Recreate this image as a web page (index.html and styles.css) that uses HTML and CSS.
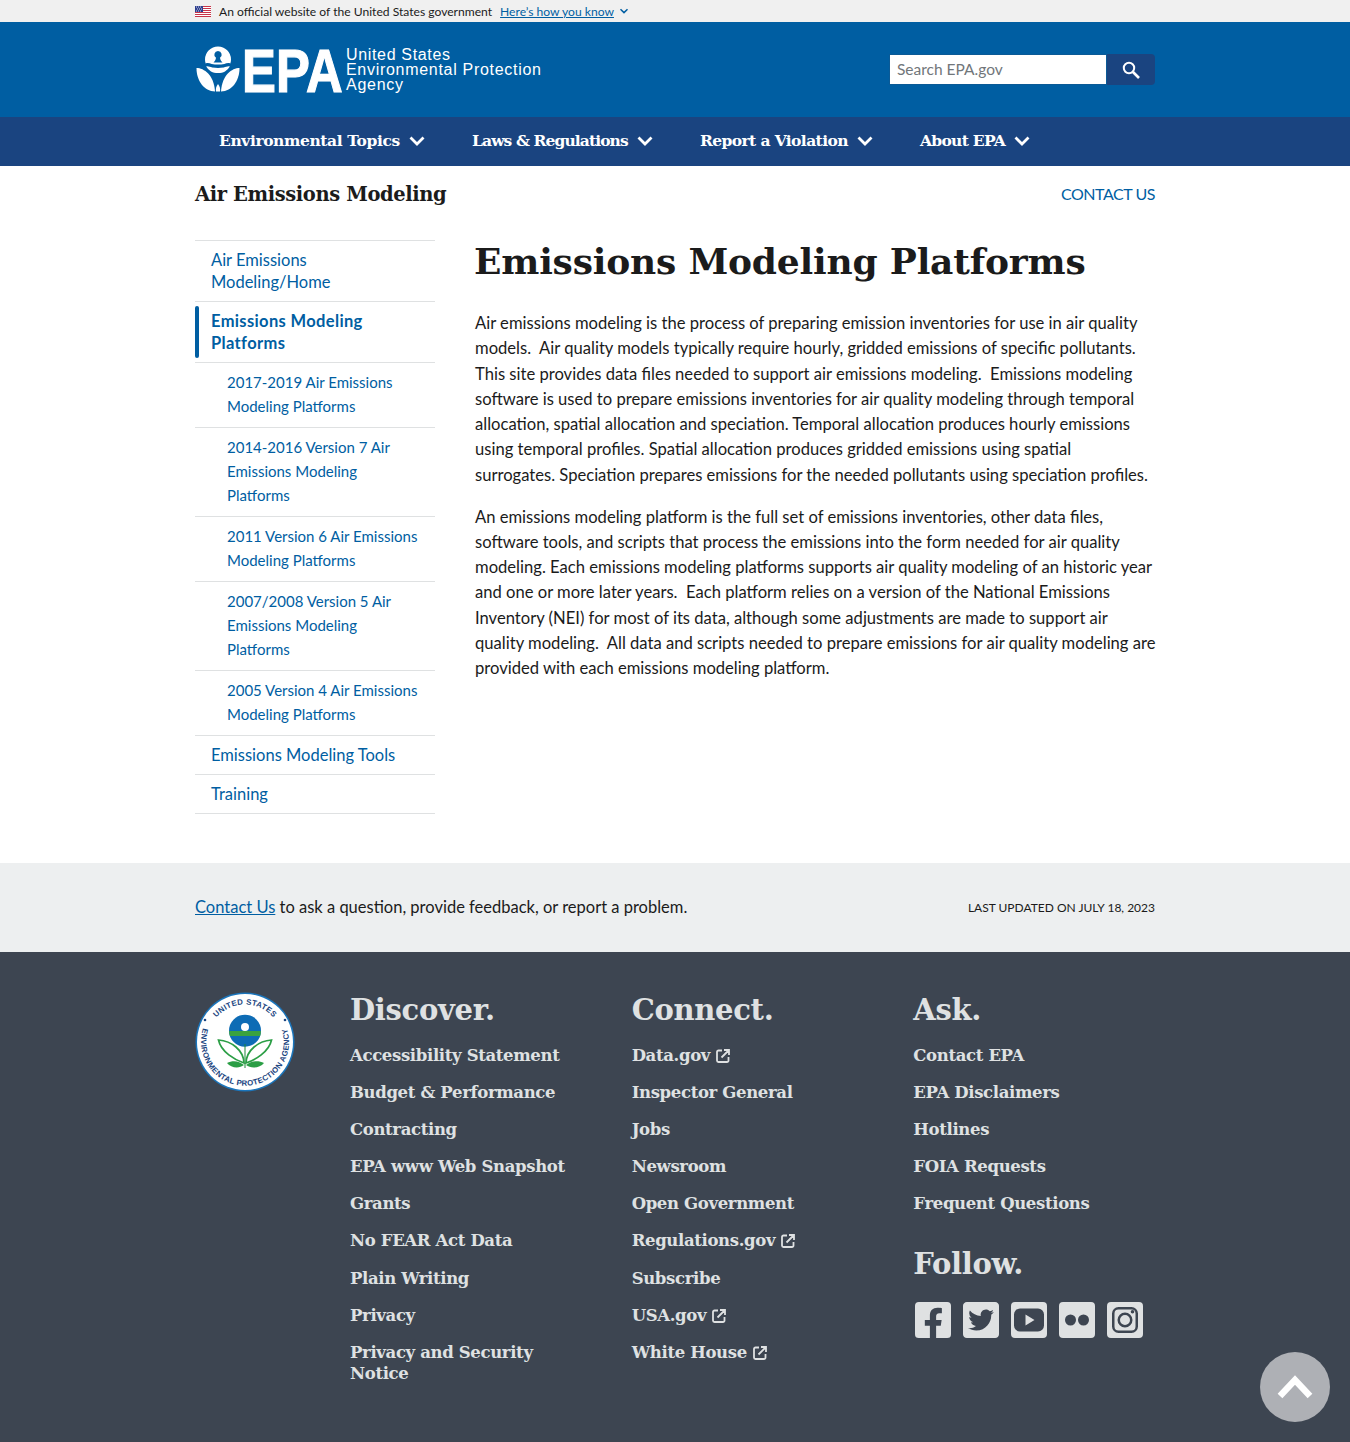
FILE: index.html
```html
<!DOCTYPE html>
<html>
<head>
    <title>Emissions Modeling Platforms | US EPA</title>
    <meta name="viewport" content="width=device-width, initial-scale=1">
    <link rel="stylesheet" href="styles.css">
</head>
<body>
    <div class="govBanner">
        <div class="wrap govRow">
            <svg class="flag" width="16" height="11" viewBox="0 0 16 11"><rect width="16" height="11" fill="#fff"/><path d="M0 .5h16M0 2.500h16M0 4.500h16M0 6.500h16M0 8.500h16M0 10.500h16" stroke="#c8344a" stroke-width="1"/><rect width="8" height="6" fill="#2e3f8f"/><path d="M1 1h1M3 1h1M5 1h1M2 3h1M4 3h1M6 3h1M1 5h1M3 5h1M5 5h1" stroke="#fff" stroke-width=".8"/></svg>
            <span>An official website of the United States government</span>
            <a class="govLink" href="#">Here’s how you know</a>
            <svg class="govChevron" width="10" height="6" viewBox="0 0 10 6"><path d="M1.500 1.200 5 4.600l3.500-3.400" fill="none" stroke="#005ea2" stroke-width="1.500"/></svg>
        </div>
    </div>

    <header class="siteHeader">
        <div class="wrap headerRow">
            <svg class="logo" width="348" height="50" viewBox="0 0 348 50">
                <path fill="#fff" fill-rule="evenodd" d="M23 1.500a13 13 0 0 1 13 13c0 1.500-.2 2.800-.7 4-2-.8-3.800-.2-6 .4-2 .5-4.300.6-6.300.6s-4.300-.1-6.300-.6c-2.200-.6-4-1.200-6-.4-.5-1.200-.7-2.500-.7-4a13 13 0 0 1 13-13zm0 4.500a3.700 3.700 0 0 0-2 6.800c-.3 2-1.200 3.500-2.500 4.700h9c-1.300-1.200-2.200-2.700-2.500-4.700a3.700 3.700 0 0 0-2-6.800z"/>
                <path fill="#fff" d="M11.200 21.500c2-.5 4 .6 6 1 2 .3 3.800.4 5.800.4s3.800-.1 5.800-.4c2-.4 4-1.500 6-1a13 13 0 0 1-4.800 5c-2 1-4.300 1.500-7 1.500s-5-.5-7-1.500a13 13 0 0 1-4.800-5z"/>
                <path fill="#fff" d="M1.500 23c7.500 0 17.500 7 18.500 23.500C9 46 1.500 36 1.500 23z"/>
                <path fill="#fff" d="M44.500 23c-7.500 0-17.500 7-18.500 23.500C37 46 44.500 36 44.500 23z"/>
                <path fill="#fff" d="M23 39c2 2.500 2.500 5 2 7.500h-4c-.5-2.500 0-5 2-7.500z"/>
                <text class="logoEpa" transform="translate(47 46.500) scale(.82 1)">EPA</text>
                <text class="logoName" x="151" y="14.500" textLength="104">United States</text>
                <text class="logoName" x="151" y="29.500" textLength="195">Environmental Protection</text>
                <text class="logoName" x="151" y="45" textLength="57">Agency</text>
            </svg>
            <form class="searchBox" onsubmit="return false">
                <input class="searchInput" type="text" placeholder="Search EPA.gov">
                <button class="searchButton" aria-label="Search">
                    <svg width="20" height="20" viewBox="0 0 20 20"><circle cx="8" cy="8" r="5.200" fill="none" stroke="#fff" stroke-width="2"/><path d="m12 12 6 6" stroke="#fff" stroke-width="2.600"/></svg>
                </button>
            </form>
        </div>
    </header>

    <nav class="mainNav">
        <div class="wrap navRow">
            <a class="navItem navTopics" href="#">Environmental Topics<svg class="chev" width="16" height="10" viewBox="0 0 16 10"><path d="M1.500 1.500 8 8l6.500-6.500" /></svg></a>
            <a class="navItem navLaws" href="#">Laws &amp; Regulations<svg class="chev" width="16" height="10" viewBox="0 0 16 10"><path d="M1.500 1.500 8 8l6.500-6.500" /></svg></a>
            <a class="navItem navReport" href="#">Report a Violation<svg class="chev" width="16" height="10" viewBox="0 0 16 10"><path d="M1.500 1.500 8 8l6.500-6.500" /></svg></a>
            <a class="navItem navAbout" href="#">About EPA<svg class="chev" width="16" height="10" viewBox="0 0 16 10"><path d="M1.500 1.500 8 8l6.500-6.500" /></svg></a>
        </div>
    </nav>

    <div class="wrap titleRow">
        <div class="siteTitle">Air Emissions Modeling</div>
        <a class="contactTop" href="#">CONTACT US</a>
    </div>

    <div class="wrap contentRow">
        <ul class="sideNav">
            <li><a href="#">Air Emissions<br>Modeling/Home</a></li>
            <li class="current"><a href="#">Emissions Modeling<br>Platforms</a></li>
            <li class="sub"><a href="#">2017-2019 Air Emissions<br>Modeling Platforms</a></li>
            <li class="sub"><a href="#">2014-2016 Version 7 Air<br>Emissions Modeling<br>Platforms</a></li>
            <li class="sub"><a href="#">2011 Version 6 Air Emissions<br>Modeling Platforms</a></li>
            <li class="sub"><a href="#">2007/2008 Version 5 Air<br>Emissions Modeling<br>Platforms</a></li>
            <li class="sub"><a href="#">2005 Version 4 Air Emissions<br>Modeling Platforms</a></li>
            <li><a href="#">Emissions Modeling Tools</a></li>
            <li><a href="#">Training</a></li>
        </ul>
        <main class="article">
            <h1>Emissions Modeling Platforms</h1>
            <p>Air emissions modeling is the process of preparing emission inventories for use in air quality<br>models.&nbsp; Air quality models typically require hourly, gridded emissions of specific pollutants.<br>This site provides data files needed to support air emissions modeling.&nbsp; Emissions modeling<br>software is used to prepare emissions inventories for air quality modeling through temporal<br>allocation, spatial allocation and speciation. Temporal allocation produces hourly emissions<br>using temporal profiles. Spatial allocation produces gridded emissions using spatial<br>surrogates. Speciation prepares emissions for the needed pollutants using speciation profiles.</p>
            <p>An emissions modeling platform is the full set of emissions inventories, other data files,<br>software tools, and scripts that process the emissions into the form needed for air quality<br>modeling. Each emissions modeling platforms supports air quality modeling of an historic year<br>and one or more later years.&nbsp; Each platform relies on a version of the National Emissions<br>Inventory (NEI) for most of its data, although some adjustments are made to support air<br>quality modeling.&nbsp; All data and scripts needed to prepare emissions for air quality modeling are<br>provided with each emissions modeling platform.</p>
        </main>
    </div>

    <div class="preFooter">
        <div class="wrap preFooterRow">
            <div><a href="#">Contact Us</a> to ask a question, provide feedback, or report a problem.</div>
            <div class="lastUpdated">LAST UPDATED ON JULY 18, 2023</div>
        </div>
    </div>

    <footer class="siteFooter">
        <div class="wrap footerGrid">
            <svg class="seal" width="100" height="100" viewBox="0 0 100 100">
                <circle cx="50" cy="50" r="49.500" fill="#1b75bb"/>
                <circle cx="50" cy="50" r="48" fill="#fff"/>
                <defs>
                    <path id="sealTop" d="M12.500 50a37.500 37.500 0 0 1 75 0"/>
                    <path id="sealBottom" d="M10 31.400A44 44 0 1 0 90 31.400"/>
                </defs>
                <text class="sealText"><textPath href="#sealTop" startOffset="50%" text-anchor="middle">UNITED STATES</textPath></text>
                <text class="sealText"><textPath href="#sealBottom" startOffset="50%" text-anchor="middle">ENVIRONMENTAL PROTECTION AGENCY</textPath></text>
                <circle cx="10" cy="28" r="1.300" fill="#1a4480"/>
                <circle cx="90" cy="28" r="1.300" fill="#1a4480"/>
                <circle cx="50" cy="38.700" r="16" fill="#0e6cb5"/>
                <path d="M34.200 39h31.600a16 16 0 0 1-.7 5H34.900a16 16 0 0 1-.7-5z" fill="#3aa23f"/>
                <circle cx="50" cy="35" r="4" fill="#fff"/>
                <path d="M49.500 52v24h1V52z" fill="#1f8a3b"/>
                <path d="M49 71C40 68 26 60 23.500 48c13 1 25 10 25.500 23z" fill="#fff" stroke="#2b9e45" stroke-width="1.700"/>
                <path d="M51 71c9-3 23-11 25.500-23-13 1-25 10-25.500 23z" fill="#fff" stroke="#2b9e45" stroke-width="1.700"/>
                <path d="M49 73c-5-4-11-5-17-2 4 5 12 6 17 2z" fill="#2b9e45"/>
                <path d="M51 73c5-4 12-5 18-2-4 5-13 6-18 2z" fill="#2b9e45"/>
            </svg>
            <div class="footerCol">
                <h2>Discover.</h2>
                <a href="#">Accessibility Statement</a>
                <a href="#">Budget &amp; Performance</a>
                <a href="#">Contracting</a>
                <a href="#">EPA www Web Snapshot</a>
                <a href="#">Grants</a>
                <a href="#">No FEAR Act Data</a>
                <a href="#">Plain Writing</a>
                <a href="#">Privacy</a>
                <a href="#">Privacy and Security Notice</a>
            </div>
            <div class="footerCol">
                <h2>Connect.</h2>
                <a href="#">Data.gov<svg class="ext" width="14" height="14" viewBox="0 0 14 14"><path d="M6 1.500H2.500a1.500 1.500 0 0 0-1.500 1.500v8.500A1.500 1.500 0 0 0 2.500 13H11a1.500 1.500 0 0 0 1.500-1.500V8M8 1h5v5M13 1 5.500 8.500" /></svg></a>
                <a href="#">Inspector General</a>
                <a href="#">Jobs</a>
                <a href="#">Newsroom</a>
                <a href="#">Open Government</a>
                <a href="#">Regulations.gov<svg class="ext" width="14" height="14" viewBox="0 0 14 14"><path d="M6 1.500H2.500a1.500 1.500 0 0 0-1.500 1.500v8.500A1.500 1.500 0 0 0 2.500 13H11a1.500 1.500 0 0 0 1.500-1.500V8M8 1h5v5M13 1 5.500 8.500" /></svg></a>
                <a href="#">Subscribe</a>
                <a href="#">USA.gov<svg class="ext" width="14" height="14" viewBox="0 0 14 14"><path d="M6 1.500H2.500a1.500 1.500 0 0 0-1.500 1.500v8.500A1.500 1.500 0 0 0 2.500 13H11a1.500 1.500 0 0 0 1.500-1.500V8M8 1h5v5M13 1 5.500 8.500" /></svg></a>
                <a href="#">White House<svg class="ext" width="14" height="14" viewBox="0 0 14 14"><path d="M6 1.500H2.500a1.500 1.500 0 0 0-1.500 1.500v8.500A1.500 1.500 0 0 0 2.500 13H11a1.500 1.500 0 0 0 1.500-1.500V8M8 1h5v5M13 1 5.500 8.500" /></svg></a>
            </div>
            <div class="footerCol">
                <h2>Ask.</h2>
                <a href="#">Contact EPA</a>
                <a href="#">EPA Disclaimers</a>
                <a href="#">Hotlines</a>
                <a href="#">FOIA Requests</a>
                <a href="#">Frequent Questions</a>
                <h2 class="followHead">Follow.</h2>
                <div class="socialRow">
                    <svg width="36" height="36" viewBox="0 32 448 448"><path d="M400 32H48A48 48 0 0 0 0 80v352a48 48 0 0 0 48 48h137.250V327.690h-63V256h63v-54.640c0-62.150 37-96.480 93.670-96.480 27.140 0 55.520 4.840 55.520 4.840v61h-31.270c-30.810 0-40.420 19.120-40.420 38.730V256h68.780l-11 71.690h-57.780V480H400a48 48 0 0 0 48-48V80a48 48 0 0 0-48-48z"/></svg>
                    <svg width="36" height="36" viewBox="0 32 448 448"><path d="M400 32H48C21.500 32 0 53.500 0 80v352c0 26.500 21.500 48 48 48h352c26.500 0 48-21.500 48-48V80c0-26.500-21.500-48-48-48zm-48.900 158.800c.2 2.800.2 5.700.2 8.500 0 86.700-66 186.600-186.600 186.600-37.200 0-71.700-10.800-100.700-29.400 5.300.6 10.400.8 15.800.8 30.700 0 58.900-10.400 81.400-28-28.800-.6-53-19.500-61.300-45.500 10.100 1.500 19.200 1.500 29.600-1.200-30-6.100-52.500-32.500-52.500-64.400v-.8c8.700 4.900 18.900 7.900 29.600 8.300a65.447 65.447 0 0 1-29.200-54.600c0-12.200 3.200-23.400 8.900-33.100 32.300 39.800 80.800 65.800 135.200 68.600-9.300-44.500 24-80.600 64-80.600 18.900 0 35.900 7.900 47.900 20.700 14.800-2.800 29-8.300 41.600-15.800-4.900 15.200-15.200 28-28.800 36.100 13.200-1.400 26-5.100 37.800-10.200-8.900 13.100-20.100 24.700-32.900 34z"/></svg>
                    <svg width="36" height="36" viewBox="0 0 36 36"><path fill-rule="evenodd" d="M4 0h28a4 4 0 0 1 4 4v28a4 4 0 0 1-4 4H4a4 4 0 0 1-4-4V4a4 4 0 0 1 4-4zm5 6.500a6 6 0 0 0-6 6v11a6 6 0 0 0 6 6h18a6 6 0 0 0 6-6v-11a6 6 0 0 0-6-6zM14.500 12.500l9 5.500-9 5.500z"/></svg>
                    <svg width="36" height="36" viewBox="0 0 36 36"><path fill-rule="evenodd" d="M4 0h28a4 4 0 0 1 4 4v28a4 4 0 0 1-4 4H4a4 4 0 0 1-4-4V4a4 4 0 0 1 4-4zm7.500 12.500a5.500 5.500 0 1 0 0 11 5.500 5.500 0 0 0 0-11zm13 0a5.500 5.500 0 1 0 0 11 5.500 5.500 0 0 0 0-11z"/></svg>
                    <svg width="36" height="36" viewBox="0 0 36 36"><path fill-rule="evenodd" d="M4 0h28a4 4 0 0 1 4 4v28a4 4 0 0 1-4 4H4a4 4 0 0 1-4-4V4a4 4 0 0 1 4-4zm7.500 5A6.500 6.500 0 0 0 5 11.500v13A6.500 6.500 0 0 0 11.500 31h13a6.500 6.500 0 0 0 6.500-6.500v-13A6.500 6.500 0 0 0 24.500 5zm0 2.500h13a4 4 0 0 1 4 4v13a4 4 0 0 1-4 4h-13a4 4 0 0 1-4-4v-13a4 4 0 0 1 4-4zM18 10.500a7.500 7.500 0 1 0 0 15 7.500 7.500 0 0 0 0-15zm0 2.500a5 5 0 1 1 0 10 5 5 0 0 1 0-10zm7.500-5a1.800 1.800 0 1 0 0 3.600 1.800 1.800 0 0 0 0-3.600z"/></svg>
                </div>
            </div>
        </div>
    </footer>

    <a class="backToTop" href="#" aria-label="Back to top">
        <svg width="36" height="24" viewBox="0 0 36 24"><path d="M3 21 18 5l15 16" fill="none" stroke="#fff" stroke-width="6.500"/></svg>
    </a>
</body>
</html>
```

FILE: styles.css
```css
* {
    box-sizing: border-box;
}
html, body {
    margin: 0;
    padding: 0;
}
body {
    font-family: "Lato", "Open Sans", sans-serif;
    color: #1b1b1b;
    font-size: 16.500px;
    background: #fff;
}
a {
    color: #005ea2;
    text-decoration: none;
}
.wrap {
    width: 960px;
    margin: 0 auto;
}

/* gov banner */
.govBanner {
    height: 22px;
    background: #f0f0f0;
    font-size: 12.100px;
}
.govRow {
    display: flex;
    align-items: center;
    height: 22px;
}
.flag {
    margin-right: 8px;
}
.govLink {
    margin-left: 8px;
    text-decoration: underline;
}
.govChevron {
    margin-left: 5px;
}

/* header */
.siteHeader {
    height: 95px;
    background: #005ea2;
}
.headerRow {
    display: flex;
    align-items: center;
    justify-content: space-between;
    height: 95px;
}
.logoEpa {
    font-family: "Liberation Sans", sans-serif;
    font-weight: 700;
    font-size: 62px;
    fill: #fff;
    stroke: #fff;
    stroke-width: 1.200;
}
.logoName {
    font-family: "Liberation Sans", sans-serif;
    font-size: 16px;
    fill: #fff;
}
.searchBox {
    display: flex;
    width: 266px;
    height: 31px;
    margin: 0;
}
.searchInput {
    width: 218px;
    height: 31px;
    border: 1px solid #0b5a96;
    padding: 0 7px 2px;
    font-family: "Lato", sans-serif;
    font-size: 15.500px;
    background: #fff;
}
.searchInput::placeholder {
    color: #71767a;
}
.searchButton {
    flex: 1;
    display: flex;
    align-items: center;
    justify-content: center;
    border: 0;
    padding: 0;
    background: #1a4480;
    border-radius: 0 4px 4px 0;
}

/* nav */
.mainNav {
    height: 49px;
    background: #1a4480;
}
.navRow {
    display: flex;
    height: 49px;
    align-items: center;
    padding-left: 24px;
    padding-bottom: 2px;
}
.navItem {
    display: flex;
    align-items: center;
    color: #fff;
    font-family: "DejaVu Serif", serif;
    font-weight: 700;
    font-size: 15.500px;
    letter-spacing: -0.4px;
    white-space: nowrap;
}
.navTopics { width: 253px; }
.navLaws { width: 228px; letter-spacing: -0.9px; }
.navReport { width: 220px; letter-spacing: -0.6px; }
.navAbout { letter-spacing: -0.7px; }
.chev {
    margin-left: 9px;
}
.chev path {
    fill: none;
    stroke: #fff;
    stroke-width: 2.800;
}

/* page title */
.titleRow {
    display: flex;
    align-items: center;
    justify-content: space-between;
    height: 56px;
}
.siteTitle {
    font-family: "DejaVu Serif", serif;
    font-weight: 700;
    font-size: 19.500px;
    letter-spacing: -0.4px;
}
.contactTop {
    font-size: 16px;
    letter-spacing: -0.45px;
    padding-bottom: 2px;
}

.contentRow {
    display: flex;
    gap: 40px;
    padding-top: 18px;
    height: 641px;
}

/* side nav */
.sideNav {
    width: 240px;
    flex: none;
    margin: 0;
    padding: 0;
    list-style: none;
    border-top: 1px solid #dfe1e2;
    font-size: 16.500px;
    align-self: flex-start;
}
.sideNav li {
    border-bottom: 1px solid #dfe1e2;
    padding: 8px 16px;
    line-height: 22px;
}
.sideNav li.sub {
    padding-left: 32px;
    padding-top: 7px;
    padding-bottom: 9px;
    line-height: 24px;
    font-size: 15px;
}
.sideNav li.current {
    position: relative;
    font-weight: 700;
    letter-spacing: 0.35px;
}
.sideNav li.current::before {
    content: "";
    position: absolute;
    left: 0;
    top: 4px;
    bottom: 4px;
    width: 4px;
    background: #005ea2;
    border-radius: 2px;
}

/* article */
.article {
    width: 680px;
    margin-top: -2px;
}
.article h1 {
    font-family: "DejaVu Serif", serif;
    font-size: 36px;
    letter-spacing: -0.2px;
    line-height: 46px;
    margin: 0 0 27px -1px;
}
.article p {
    margin: 0 0 16.500px;
    font-size: 16.600px;
    line-height: 25.300px;
    white-space: nowrap;
}

/* contact strip */
.preFooter {
    height: 89px;
    background: #edeff0;
}
.preFooterRow {
    display: flex;
    align-items: center;
    justify-content: space-between;
    height: 88px;
}
.preFooter a {
    text-decoration: underline;
}
.lastUpdated {
    font-size: 12px;
}

/* footer */
.siteFooter {
    height: 490px;
    background: #3d4551;
    color: #dfe1e2;
}
.footerGrid {
    display: grid;
    grid-template-columns: 115px repeat(3, 1fr);
    column-gap: 40px;
    padding-top: 40px;
}
.footerCol h2 {
    font-family: "DejaVu Serif", serif;
    font-size: 29px;
    line-height: 36px;
    letter-spacing: -0.3px;
    margin: 0 0 17px;
}
.footerCol a {
    display: block;
    color: #dfe1e2;
    font-family: "DejaVu Serif", serif;
    font-weight: 700;
    font-size: 16.500px;
    letter-spacing: -0.35px;
    line-height: 21px;
    margin-bottom: 16.100px;
}
.footerCol h2.followHead {
    margin-top: 32px;
    margin-bottom: 20px;
}
.ext {
    margin-left: 6px;
    vertical-align: -2px;
}
.ext path {
    fill: none;
    stroke: #dfe1e2;
    stroke-width: 1.800;
}
.socialRow {
    display: flex;
    gap: 12px;
    padding-left: 2px;
}
.socialRow svg {
    fill: #dfe1e2;
}
.sealText {
    font-family: "Liberation Sans", sans-serif;
    font-weight: 700;
    font-size: 7.800px;
    letter-spacing: 0.3px;
    fill: #1a4480;
}

.backToTop {
    position: fixed;
    right: 20px;
    bottom: 20px;
    width: 70px;
    height: 70px;
    border-radius: 50%;
    background: #aeb0b5;
    display: flex;
    align-items: center;
    justify-content: center;
}
```
